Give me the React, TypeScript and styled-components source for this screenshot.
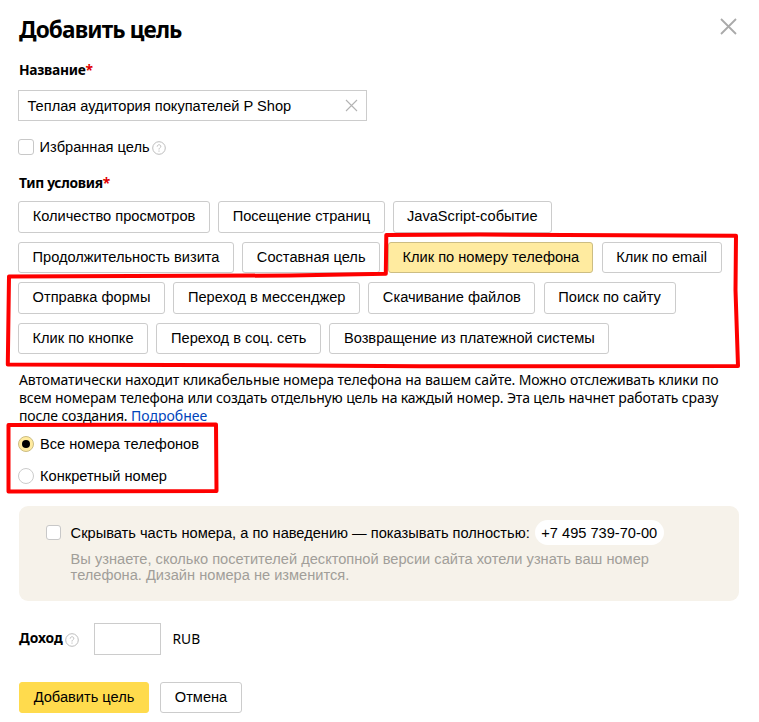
import React from "react";
import styled, { createGlobalStyle } from "styled-components";

const GlobalStyle = createGlobalStyle`
  *, *::before, *::after { box-sizing: border-box; }
  body { margin: 0; background: #fff; }
`;

const sans = `"Liberation Sans", Arial, sans-serif`;
const display = `"Noto Sans", sans-serif`;

const Dialog = styled.main`
  position: relative;
  width: 759px;
  height: 722px;
  padding: 14px 21px 0 18px;
  background: #fff;
  color: #000;
  font: 14.63px/18px ${sans};
`;

const Header = styled.header`
  display: flex;
  justify-content: space-between;
  height: 32px;
`;

const Title = styled.h1`
  margin: 0 0 0 1px;
  font: bold 22.6px/32px ${display};
  letter-spacing: -0.86px;
  white-space: nowrap;
`;

const IconButton = styled.button`
  display: flex;
  flex: none;
  padding: 0;
  border: 0;
  background: none;
`;

const CloseButton = styled(IconButton)`
  width: 20px;
  height: 24px;
  align-items: center;
  justify-content: center;
`;

const Label = styled.label<{ $top?: number }>`
  display: block;
  height: 18px;
  margin: ${(p) => p.$top ?? 0}px 0 0 1px;
  font: bold 13.8px/18px ${display};
  letter-spacing: -0.3px;
  white-space: nowrap;
`;

const Required = styled.span`
  color: #e00000;
`;

const Field = styled.div`
  display: flex;
  align-items: center;
  justify-content: space-between;
  width: 349px;
  height: 31px;
  margin-top: 11px;
  padding: 0 8px 0 8.5px;
  border: 1px solid #ccc;
  white-space: nowrap;
`;

const OptionLine = styled.div<{ $top: number; $gap: number }>`
  display: flex;
  align-items: center;
  height: 18px;
  margin-top: ${(p) => p.$top}px;
  gap: ${(p) => p.$gap}px;
  white-space: nowrap;
`;

const Help = styled.svg`
  flex: none;
  width: 14px;
  height: 14px;
  margin: 2px 0 0 2px;
`;

const Box = styled.span<{ $size?: number }>`
  flex: none;
  width: ${(p) => p.$size ?? 16}px;
  height: ${(p) => p.$size ?? 16}px;
  border: 1px solid #c8c8c8;
  border-radius: 3px;
  background: #fff;
`;

const Conditions = styled.div`
  display: flex;
  flex-direction: column;
  gap: 9px;
  margin-top: 9px;
`;

const Button = styled.button<{ $tone?: "selected" | "primary"; $width: number }>`
  flex: none;
  width: ${(p) => p.$width}px;
  padding: 0 0 1px;
  border: 1px solid ${(p) => (p.$tone === "selected" ? "#ccbd83" : p.$tone === "primary" ? "#ffdb4d" : "#ccc")};
  border-radius: 3px;
  background: ${(p) => (p.$tone === "selected" ? "#ffeba0" : p.$tone === "primary" ? "#ffdb4d" : "#fff")};
  color: #000;
  font: 14.63px/18px ${sans};
  text-align: center;
  white-space: nowrap;
`;

const ConditionRow = styled.div<{ $height: number }>`
  display: flex;
  gap: 8.2px;
  height: ${(p) => p.$height}px;

  > ${Button} { padding-bottom: ${(p) => (p.$height > 31 ? 3 : 1)}px; }
`;

const Description = styled.p`
  margin: 17px 0 0 1px;
  font: 14px/18px ${display};
  letter-spacing: -0.11px;
  white-space: nowrap;
`;

const TightLine = styled.span`
  letter-spacing: -0.14px;
`;

const Link = styled.a`
  color: #04b;
  letter-spacing: 0.02px;
`;

const Radio = styled.span<{ $on?: boolean }>`
  display: flex;
  align-items: center;
  justify-content: center;
  flex: none;
  width: 16px;
  height: 16px;
  border: 1px solid ${(p) => (p.$on ? "#ccbd83" : "#ccc")};
  border-radius: 50%;
  background: ${(p) => (p.$on ? "#ffeba0" : "#fff")};

  &::after {
    content: "";
    width: 8px;
    height: 8px;
    border-radius: 50%;
    background: ${(p) => (p.$on ? "#000" : "transparent")};
  }
`;

const Panel = styled.section`
  display: flex;
  align-items: flex-start;
  width: 720px;
  height: 95px;
  margin: 21px 0 0 1px;
  padding: 14px 0 0 27px;
  gap: 9.6px;
  border-radius: 9px;
  background: #f6f2ea;
  white-space: nowrap;

  > ${Box} { margin-top: 5px; }
`;

const PanelTitle = styled.div`
  display: flex;
  align-items: center;
  height: 25px;
  gap: 5px;
`;

const Phone = styled.span`
  width: 129px;
  height: 25px;
  border-radius: 13px;
  background: #fff;
  line-height: 26px;
  text-align: center;
`;

const Hint = styled.p`
  margin: 6px 0 0;
  color: #a19e99;
  line-height: 16px;
`;

const Income = styled.div`
  display: flex;
  align-items: center;
  height: 32px;
  margin-top: 22px;
`;

const IncomeLabel = styled(Label)`
  width: 44px;
  height: 20px;
  letter-spacing: -0.05px;
`;

const Amount = styled.input`
  width: 67px;
  height: 32px;
  margin: 0 11.5px 0 15px;
  padding: 0 8px;
  border: 1px solid #ccc;
  border-radius: 0;
  background: #fff;
`;

const Currency = styled.span`
  font: 13.8px/18px ${display};
`;

const Actions = styled.footer`
  display: flex;
  height: 31px;
  margin: 27px 0 0 1px;
  gap: 11px;
`;

const Annotation = styled.svg`
  position: absolute;
  inset: 0;
  width: 759px;
  height: 722px;
  pointer-events: none;
`;

const Cross = ({ size, color, weight }: { size: number; color: string; weight: number }) => (
  <svg width={size} height={size} viewBox={`0 0 ${size} ${size}`}>
    <path
      d={`M1 1 L${size - 1} ${size - 1} M${size - 1} 1 L1 ${size - 1}`}
      stroke={color}
      strokeWidth={weight}
    />
  </svg>
);

const HelpIcon = () => (
  <Help viewBox="0 0 14 14" fill="none" stroke="#bdbdbd">
    <circle cx="7" cy="7" r="6.3" strokeWidth="1" />
    <path d="M5.2 5.6C5.2 3.2 8.8 3.2 8.8 5.4C8.8 6.8 7 6.8 7 8.5M7 9.5V10.7" strokeWidth="1" />
  </Help>
);

type Condition = [text: string, width: number];

const selected = "Клик по номеру телефона";

const rows: { height: number; items: Condition[] }[] = [
  { height: 32, items: [["Количество просмотров", 192], ["Посещение страниц", 166.4], ["JavaScript-событие", 159]] },
  { height: 31, items: [["Продолжительность визита", 216], ["Составная цель", 138], [selected, 205], ["Клик по email", 120]] },
  { height: 32, items: [["Отправка формы", 147], ["Переход в мессенджер", 187], ["Скачивание файлов", 167], ["Поиск по сайту", 132]] },
  { height: 31, items: [["Клик по кнопке", 130], ["Переход в соц. сеть", 165], ["Возвращение из платежной системы", 280]] },
];

export default function App() {
  return (
    <>
      <GlobalStyle />
      <Dialog>
        <Header>
          <Title>Добавить цель</Title>
          <CloseButton aria-label="Закрыть">
            <Cross size={17} color="#aaa" weight={1.8} />
          </CloseButton>
        </Header>

        <Label $top={15}>
          Название<Required>*</Required>
        </Label>
        <Field>
          Теплая аудитория покупателей P Shop
          <IconButton aria-label="Очистить">
            <Cross size={13} color="#b3b3b3" weight={1.1} />
          </IconButton>
        </Field>

        <OptionLine $top={17} $gap={0}>
          <OptionLine $top={0} $gap={5.6}>
            <Box />
            Избранная цель
          </OptionLine>
          <HelpIcon />
        </OptionLine>

        <Label $top={18}>
          Тип условия<Required>*</Required>
        </Label>
        <Conditions>
          {rows.map((row) => (
            <ConditionRow key={row.items[0][0]} $height={row.height}>
              {row.items.map(([text, width]) => (
                <Button key={text} $width={width} $tone={text === selected ? "selected" : undefined}>
                  {text}
                </Button>
              ))}
            </ConditionRow>
          ))}
        </Conditions>

        <Description>
          Автоматически находит кликабельные номера телефона на вашем сайте. Можно отслеживать клики по
          <br />
          <TightLine>
            всем номерам телефона или создать отдельную цель на каждый номер. Эта цель начнет работать сразу
          </TightLine>
          <br />
          <TightLine>после создания. </TightLine>
          <Link>Подробнее</Link>
        </Description>

        <OptionLine $top={10} $gap={6}>
          <Radio $on />
          Все номера телефонов
        </OptionLine>
        <OptionLine $top={14} $gap={6}>
          <Radio />
          Конкретный номер
        </OptionLine>

        <Panel>
          <Box $size={15} />
          <div>
            <PanelTitle>
              Скрывать часть номера, а по наведению — показывать полностью:
              <Phone>+7 495 739-70-00</Phone>
            </PanelTitle>
            <Hint>
              Вы узнаете, сколько посетителей десктопной версии сайта хотели узнать ваш номер
              <br />
              телефона. Дизайн номера не изменится.
            </Hint>
          </div>
        </Panel>

        <Income>
          <IncomeLabel>Доход</IncomeLabel>
          <HelpIcon />
          <Amount aria-label="Доход" />
          <Currency>RUB</Currency>
        </Income>

        <Actions>
          <Button $width={130} $tone="primary">Добавить цель</Button>
          <Button $width={82}>Отмена</Button>
        </Actions>

        <Annotation fill="none" stroke="#fe0000" strokeWidth="4" strokeLinejoin="round">
          <path d="M386.3 235 L480 234.5 L736 235.8 L735.5 290 L738 366 L420 366.3 L300 365.5 L7.8 364.5 L9 276.5 L290 275.5 L385.8 273.8Z" />
          <path d="M8.5 425 L216 424.5 L216.5 491 L8.5 491.5Z" />
        </Annotation>
      </Dialog>
    </>
  );
}
